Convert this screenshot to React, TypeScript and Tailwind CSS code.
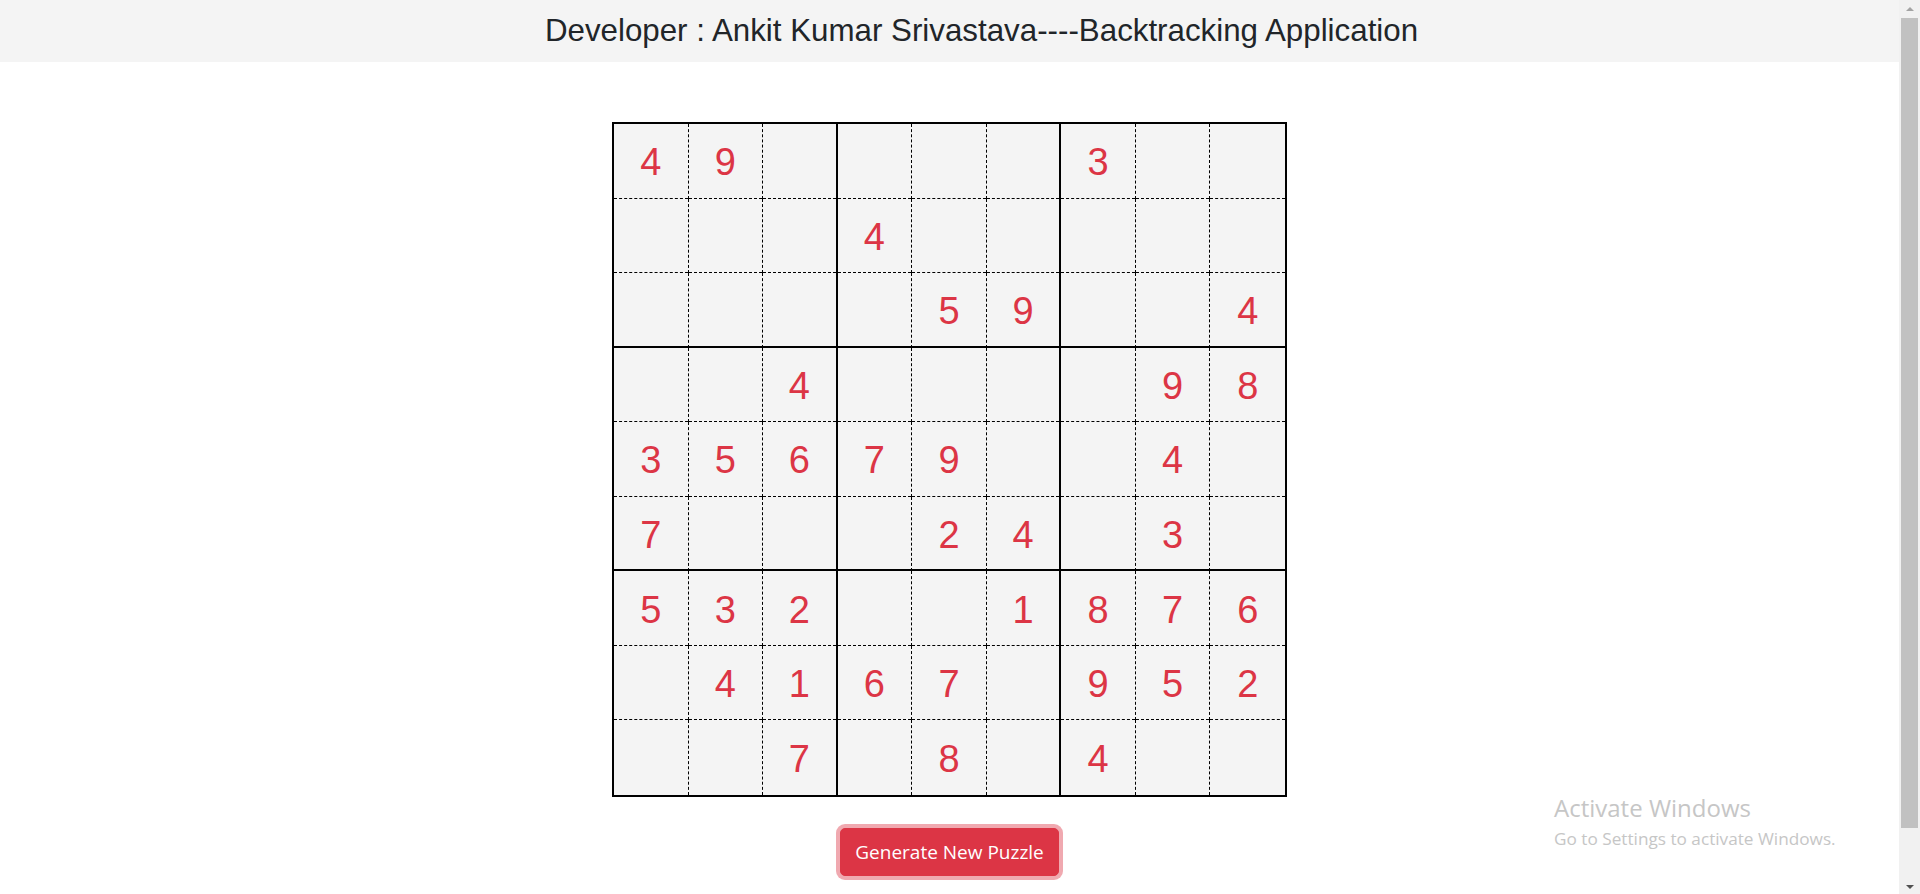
const puzzle = [
  [4, 9, 0, 0, 0, 0, 3, 0, 0],
  [0, 0, 0, 4, 0, 0, 0, 0, 0],
  [0, 0, 0, 0, 5, 9, 0, 0, 4],
  [0, 0, 4, 0, 0, 0, 0, 9, 8],
  [3, 5, 6, 7, 9, 0, 0, 4, 0],
  [7, 0, 0, 0, 2, 4, 0, 3, 0],
  [5, 3, 2, 0, 0, 1, 8, 7, 6],
  [0, 4, 1, 6, 7, 0, 9, 5, 2],
  [0, 0, 7, 0, 8, 0, 4, 0, 0],
]

function Cell({ r, c, v }: { r: number; c: number; v: number }) {
  const thickR = c === 2 || c === 5
  const thickB = r === 2 || r === 5
  return (
    <div
      className={`relative flex items-center justify-center bg-[#f4f4f4] text-[38px] text-[#dc3545] ${c === 8 ? '' : thickR ? 'border-r-2 border-solid border-r-black' : 'border-r border-dashed border-r-black'}`}
      style={{ fontFamily: '"Liberation Sans", Arial, sans-serif' }}
    >
      {/* bottom edge drawn separately so dashed and solid can differ per side */}
      {r !== 8 && (
        <div
          className={`absolute left-0 right-0 bottom-0 ${thickB ? 'border-b-2 border-solid border-b-black' : 'border-b border-dashed border-b-black'}`}
        />
      )}
      <span className="pt-[3px]">{v !== 0 ? v : ''}</span>
    </div>
  )
}

function Scrollbar() {
  return (
    <div className="relative flex h-full w-[21px] shrink-0 flex-col items-center bg-[#f1f1f1]">
      <div className="mt-[7px] h-0 w-0 border-x-[4px] border-b-[4px] border-x-transparent border-b-[#a3a3a3]" />
      <div className="mt-[7px] h-[810px] w-[17px] bg-[#c1c1c1]" />
      <div className="absolute bottom-[5px] h-0 w-0 border-x-[4px] border-t-[4px] border-x-transparent border-t-[#505050]" />
    </div>
  )
}

export default function App() {
  return (
    <div className="flex h-[894px] w-full overflow-hidden bg-white">
      <div className="relative flex min-w-0 flex-1 flex-col items-center">
        <header className="flex h-[62px] w-full items-center justify-center bg-[#f4f4f4] pl-[64px]">
          <h1
            className="pt-[1px] text-[31.3px] text-[#212529]"
            style={{ fontFamily: '"Liberation Sans", Arial, sans-serif' }}
          >
            Developer : Ankit Kumar Srivastava----Backtracking Application
          </h1>
        </header>

        <div className="mt-[60px] grid h-[675px] w-[675px] grid-cols-9 grid-rows-9 border-2 border-black">
          {puzzle.map((row, r) => row.map((v, c) => <Cell key={`${r}-${c}`} r={r} c={c} v={v} />))}
        </div>

        <button
          className="mt-[31px] flex h-[48px] w-[219px] items-center justify-center rounded-[5px] border border-[#dc3545] bg-[#dc3545] text-[19px] text-white shadow-[0_0_0_4px_rgba(225,83,97,0.5)]"
          style={{ fontFamily: '"Open Sans", "Noto Sans", sans-serif' }}
        >
          Generate New Puzzle
        </button>

        {/* Windows activation watermark */}
        <div
          className="pointer-events-none absolute left-[1554px] top-[792px] text-[#c6c6c6]"
          style={{ fontFamily: '"Open Sans", "Noto Sans", sans-serif' }}
        >
          <div className="text-[24px] leading-[32px]">Activate Windows</div>
          <div className="mt-[3px] text-[17.2px] leading-[24px]">Go to Settings to activate Windows.</div>
        </div>
      </div>
      <Scrollbar />
    </div>
  )
}
